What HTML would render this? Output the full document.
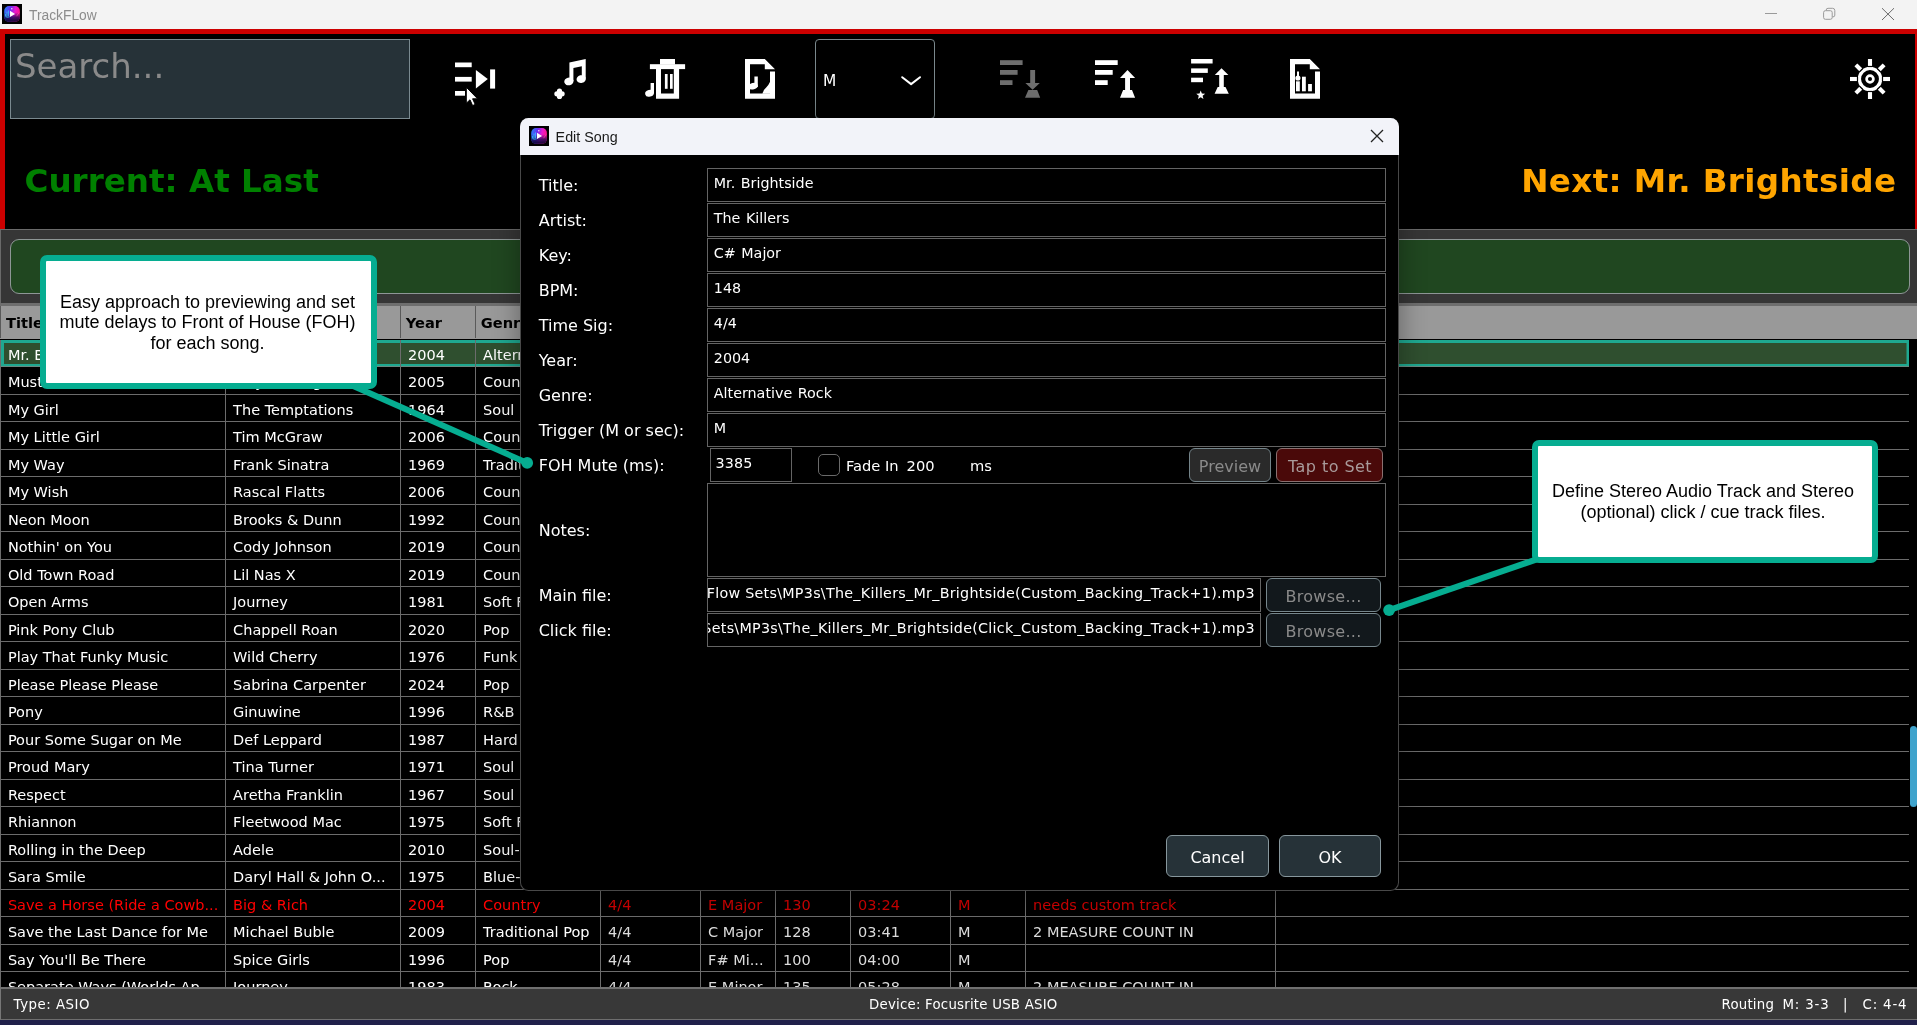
<!DOCTYPE html>
<html><head><meta charset="utf-8"><title>TrackFLow</title>
<style>
*{box-sizing:border-box;margin:0;padding:0}
html,body{width:1917px;height:1025px;overflow:hidden;background:#000}
body{position:relative;font-family:"DejaVu Sans","Liberation Sans",sans-serif;color:#fff}
.abs{position:absolute}
#titlebar{position:absolute;left:0;top:0;width:1917px;height:29px;background:#f3f3f3}
#titlebar .appicon{position:absolute;left:2px;top:4px}
#titlebar .ttl{position:absolute;left:29px;top:1px;line-height:29px;font-family:"Liberation Sans",sans-serif;font-size:13.8px;color:#8c8c8c}
#redframe{position:absolute;left:0;top:29px;width:1917px;height:200px;background:#000;border:5px solid #cc0000;border-bottom:none;border-right-width:2.2px}
#search{position:absolute;left:10px;top:39px;width:400px;height:80px;background:#263238;border:1px solid #7a8a90;color:#8a8a8a;font-size:34px;line-height:40px;padding:5.5px 0 0 4px}
#current{position:absolute;left:24.5px;top:160.5px;font-weight:bold;font-size:32.6px;line-height:40px;color:#008000;white-space:nowrap}
#next{position:absolute;right:20.6px;top:160.5px;letter-spacing:0.36px;font-weight:bold;font-size:32.6px;line-height:40px;color:#ffa500;white-space:nowrap}
#combo{position:absolute;left:815px;top:39px;width:120px;height:80px;border:1px solid #7a888c;border-radius:4px;background:#000}
#combo span{position:absolute;left:7px;top:1px;line-height:80px;font-size:15.4px;color:#fff}
#panel{position:absolute;left:0;top:229px;width:1917px;height:76px;background:#363636;border-top:1px solid #6a6a6a;border-left:1.2px solid #6a6a6a}
#greenbar{position:absolute;left:10px;top:239px;width:1900px;height:55px;background:#204720;border:1px solid #8e9696;border-radius:9px}
#table{position:absolute;left:0;top:302.6px;width:1917px;height:684.2px;overflow:hidden;background:#000}
.thead{position:absolute;left:0;top:0;width:1917px;height:36.2px;background:#999;border-top:3.3px solid #6e6e6e}
.hc{position:absolute;top:0;height:32.9px;line-height:33.6px;padding-left:5px;font-weight:bold;font-size:14.6px;color:#000;border-left:1.2px solid #5a5a5a;white-space:nowrap;overflow:hidden}
.tbody{position:absolute;left:0;top:37.4px;width:1909px;height:660px}
.tr{position:absolute;left:0;width:1909px;height:27.5px;border-bottom:1.3px solid #6c6c6c;font-size:14.5px;line-height:31px;color:#fff}
.tr.red{color:#f00}
.td.dim{color:#dcdcdc}
.tr.red .td.dim{color:#d20000}
.tr.sel{background:#2f4f2f;box-shadow:inset 0 3px 0 #1fa890, inset 0 -1px 0 #6a8a80, inset 0 -3px 0 #1fa890, inset 4px 0 0 #1fa890, inset -2.5px 0 0 #1fa890;border-bottom:none}
.td{position:absolute;top:0;height:27.5px;padding-left:7.3px;white-space:nowrap;overflow:hidden;border-left:1.3px solid #6c6c6c}
.tr .td:first-child{padding-left:6.9px}
#status{position:absolute;left:0;top:986.7px;width:1917px;height:33.4px;background:#383838;border-top:2.4px solid #707070;border-bottom:1.4px solid #6e6e6e;border-left:1.2px solid #777;font-size:13.33px;letter-spacing:0.22px;line-height:31.6px;color:#fff}
#bottomstrip{position:absolute;left:0;top:1020.1px;width:1917px;height:4.9px;background:#20204a}
#scroll{position:absolute;left:1909.9px;top:726px;width:7.1px;height:80.8px;background:#3fa3cc;border-radius:3.5px}
#dialog{position:absolute;left:519.6px;top:118px;width:879.2px;height:772.9px;background:#000;box-shadow:inset 0 0 0 1px #484848, 0 2px 26px 2px rgba(0,0,0,0.32);border-radius:8.5px;overflow:hidden}
#dtitle{position:absolute;left:0;top:0;width:879px;height:36.8px;background:#f2f3f9}
#dtitle .appicon{position:absolute;left:9px;top:8px}
#dtitle .ttl{position:absolute;left:36px;top:0.7px;line-height:37px;font-family:"Liberation Sans",sans-serif;font-size:14.3px;color:#1a1a1a}
#dialog{word-spacing:0}
.fld{word-spacing:1px}
.lbl{position:absolute;left:19.1px;font-size:16px;line-height:20px;color:#fff;white-space:nowrap}
.fld{position:absolute;left:187.7px;width:678.5px;height:34.2px;border:1.4px solid #646464;font-size:14.3px;line-height:17px;padding:6.5px 0 0 5.5px;color:#fff;white-space:nowrap;overflow:hidden}
.btn{position:absolute;border-radius:6px;font-size:16px;text-align:center;white-space:nowrap}
.sm{font-size:14.67px;line-height:20px;color:#fff;white-space:nowrap}
.fld.file{padding-left:0}
.fld.file span{position:absolute;right:5px;top:5.5px;letter-spacing:0.27px;word-spacing:0}
.callout{position:absolute;background:#fff;border:6px solid #06ad91;border-radius:7px;color:#000;font-family:"Liberation Sans",sans-serif;font-size:18px;line-height:20.7px;text-align:center}
#root{position:absolute;left:0;top:0;width:1917px;height:1025px;overflow:hidden;will-change:transform;background:#000}
</style></head><body><div id="root">
<div id="titlebar"><svg class="appicon" viewBox="0 0 20 20" width="20" height="20"><defs><linearGradient id="ig1" x1="0" y1="0" x2="1" y2="0.25"><stop offset="0" stop-color="#1e8cff"/><stop offset="0.42" stop-color="#6a2cf0"/><stop offset="0.72" stop-color="#e81ad0"/><stop offset="1" stop-color="#ff1490"/></linearGradient><linearGradient id="ih1" x1="0" y1="0" x2="0" y2="1"><stop offset="0.4" stop-color="#08044a" stop-opacity="0"/><stop offset="0.72" stop-color="#0a0648" stop-opacity="0.72"/><stop offset="1" stop-color="#06042a" stop-opacity="0.95"/></linearGradient></defs><rect width="20" height="20" fill="#000"/><rect x="2.2" y="2.1" width="15.7" height="15.7" rx="4.8" fill="url(#ig1)"/><rect x="2.2" y="2.1" width="15.7" height="15.7" rx="4.8" fill="url(#ih1)"/><path d="M3.6 9.8v2.2M5 7.6v4.6M6.6 6.4v5.6" stroke="#35c8ff" stroke-width="1" fill="none" opacity="0.85"/><path d="M3.4 12.6Q5.5 13.6 7.6 12.8" stroke="#35d8ff" stroke-width="0.9" fill="none" opacity="0.9"/><circle cx="9.8" cy="4.7" r="0.75" fill="#fff" opacity="0.9"/><path d="M14.6 12.2L17 8.6" stroke="#ff60c8" stroke-width="0.6" opacity="0.8"/><path d="M8 6.8L13.1 9.9L8 13Z" fill="#fff"/></svg><span class="ttl">TrackFLow</span>
<svg class="abs" style="left:1755px;top:0" width="162" height="29" viewBox="0 0 162 29"><g stroke="#9a9a9a" stroke-width="1" fill="none"><path d="M10 13.5h12"/><rect x="68.6" y="10.7" width="8.6" height="8.6" rx="1.8"/><path d="M71.2 10.4v-0.3a1.8 1.8 0 0 1 1.8-1.8h4.6a2.2 2.2 0 0 1 2.2 2.2v4.6a1.8 1.8 0 0 1-1.8 1.8h-0.5"/></g><path d="M127 8.2l12 11.8M139 8.2l-12 11.8" stroke="#6a6a6a" stroke-width="1" fill="none"/></svg>
</div>
<div id="redframe"></div>
<div id="search">Search...</div>
<div id="current">Current: At Last</div>
<div id="next">Next: Mr. Brightside</div>
<div id="combo"><span>M</span><svg class="abs" style="left:84px;top:34px" width="22" height="14" viewBox="0 0 22 14"><path d="M2.2 3.2l8.9 6.9 8.9-6.9" stroke="#fff" stroke-width="2" fill="none" stroke-linecap="round" stroke-linejoin="round"/></svg></div>
<svg class="abs" style="left:0;top:0" width="1917" height="125" viewBox="0 0 1917 125"><g fill="#fff"><rect x="455" y="62.5" width="16.7" height="4.7"/><rect x="455" y="76.9" width="16.7" height="4.7"/><rect x="455" y="91" width="10" height="4.7"/><path d="M475.9 70L487.8 79L475.9 88.4Z"/><rect x="490.1" y="69.4" width="5" height="19.2"/><path d="M466.3 87.2V103.2L470 99.8L472.6 105.6L475.2 104.4L472.6 98.8H477.6Z" fill="#fff" stroke="#000" stroke-width="1" stroke-linejoin="miter"/><path d="M569.4 62.6L585.7 59V78.6H581.8V66.2L573.4 68.1V81H569.4Z"/><ellipse cx="568.9" cy="81.4" rx="4.7" ry="3.9" transform="rotate(-15 568.9 81.4)"/><ellipse cx="581.2" cy="79.1" rx="4.7" ry="3.9" transform="rotate(-15 581.2 79.1)"/><path d="M559.5 91.2V96.4M556.9 93.8H562.1" stroke="#fff" stroke-width="5.2" stroke-linecap="round" fill="none"/><rect x="660" y="59" width="15" height="5.6"/><rect x="649.9" y="64.2" width="35.2" height="4.9"/><path fill-rule="evenodd" d="M656 69H679.1V98.8H656Z M661 69V93.6H673.8V69Z"/><rect x="664.9" y="74" width="2.7" height="14.8"/><rect x="670" y="74" width="2.7" height="14.8"/><rect x="650.6" y="83" width="3.4" height="10.5"/><ellipse cx="649.5" cy="93.3" rx="4.4" ry="3.3" transform="rotate(-15 649.5 93.3)"/><path d="M745 59H764.8V64.2H750V93.6H770V71.5H775V98.8H745Z M764.8 59L775 69.2H764.8Z" fill="#fff"/><rect x="754.4" y="76.5" width="3.4" height="10.5"/><ellipse cx="753.2" cy="86.2" rx="4.6" ry="3.2" transform="rotate(-15 753.2 86.2)"/><path d="M770.2 81.5V93.8H762.4Q763.5 89.6 766.2 87.6Q768.6 85.2 770.2 81.5Z"/><rect x="1095" y="60.2" width="22.7" height="4.8" fill="#fff"/><rect x="1095" y="70" width="17.7" height="4.8" fill="#fff"/><rect x="1095" y="80.2" width="12.7" height="4.8" fill="#fff"/><path d="M1127.5 70L1135.1 78H1130V90H1132L1135.1 97.7H1120L1123.1 90H1125.1V78H1120Z"/><rect x="1191.1" y="59" width="21.5" height="4.5" fill="#fff"/><rect x="1191.1" y="68.4" width="16.7" height="4.5" fill="#fff"/><rect x="1191.1" y="77.7" width="11.9" height="4.5" fill="#fff"/><path d="M1221.5 68.2L1228.4 75H1223.8V87.1H1225.5L1228.8 93.8H1214.6L1217.7 87.1H1219.2V75H1214.8Z"/><path d="M1200.70 90.50L1201.88 93.58L1205.17 93.75L1202.60 95.82L1203.46 99.00L1200.70 97.20L1197.94 99.00L1198.80 95.82L1196.23 93.75L1199.52 93.58Z"/><path d="M1290 59H1309.8V64.2H1295V93.6H1315V71.5H1320V98.8H1290Z M1309.8 59L1320 69.2H1309.8Z" fill="#fff"/><rect x="1296" y="81.3" width="3.8" height="10"/><rect x="1302" y="76.7" width="3.8" height="14.6"/><rect x="1308.1" y="84" width="3.8" height="7.3"/><circle cx="1297.9" cy="78" r="2.6"/><rect x="1297" y="71.5" width="2" height="7"/></g><g fill="#6e6e6e"><rect x="1000" y="60.2" width="22.6" height="4.8" fill="#6e6e6e"/><rect x="1000" y="70" width="17.6" height="4.8" fill="#6e6e6e"/><rect x="1000" y="80.2" width="12.5" height="4.8" fill="#6e6e6e"/><path d="M1030.2 70H1035.1V83H1039.8L1032.6 89.8L1025.4 83H1030.2Z"/><path d="M1028.4 90H1037.2L1040.2 97.7H1025Z"/></g><circle cx="1870" cy="79" r="10.6" fill="none" stroke="#fff" stroke-width="3.3"/><circle cx="1870" cy="79" r="3.4" fill="none" stroke="#fff" stroke-width="2.7"/><rect x="1867.95" y="59" width="4.1" height="6.9" fill="#fff" transform="rotate(0 1870 79)"/><rect x="1867.95" y="66.1" width="4.1" height="1" fill="#000" transform="rotate(0 1870 79)"/><rect x="1867.95" y="59" width="4.1" height="6.9" fill="#fff" transform="rotate(45 1870 79)"/><rect x="1867.95" y="66.1" width="4.1" height="1" fill="#000" transform="rotate(45 1870 79)"/><rect x="1867.95" y="59" width="4.1" height="6.9" fill="#fff" transform="rotate(90 1870 79)"/><rect x="1867.95" y="66.1" width="4.1" height="1" fill="#000" transform="rotate(90 1870 79)"/><rect x="1867.95" y="59" width="4.1" height="6.9" fill="#fff" transform="rotate(135 1870 79)"/><rect x="1867.95" y="66.1" width="4.1" height="1" fill="#000" transform="rotate(135 1870 79)"/><rect x="1867.95" y="59" width="4.1" height="6.9" fill="#fff" transform="rotate(180 1870 79)"/><rect x="1867.95" y="66.1" width="4.1" height="1" fill="#000" transform="rotate(180 1870 79)"/><rect x="1867.95" y="59" width="4.1" height="6.9" fill="#fff" transform="rotate(225 1870 79)"/><rect x="1867.95" y="66.1" width="4.1" height="1" fill="#000" transform="rotate(225 1870 79)"/><rect x="1867.95" y="59" width="4.1" height="6.9" fill="#fff" transform="rotate(270 1870 79)"/><rect x="1867.95" y="66.1" width="4.1" height="1" fill="#000" transform="rotate(270 1870 79)"/><rect x="1867.95" y="59" width="4.1" height="6.9" fill="#fff" transform="rotate(315 1870 79)"/><rect x="1867.95" y="66.1" width="4.1" height="1" fill="#000" transform="rotate(315 1870 79)"/></svg>
<div id="panel"></div>
<div id="greenbar"></div>
<div id="table"><div class="thead"><div class="hc" style="left:0px;width:225px">Title</div><div class="hc" style="left:224.8px;width:175px">Artist</div><div class="hc" style="left:399.8px;width:75px">Year</div><div class="hc" style="left:474.8px;width:125px">Genre</div><div class="hc" style="left:599.8px;width:100px">Time Sig</div><div class="hc" style="left:699.8px;width:75px">Key</div><div class="hc" style="left:774.8px;width:75px">BPM</div><div class="hc" style="left:849.8px;width:100px">Duration</div><div class="hc" style="left:949.8px;width:75px">Trigger</div><div class="hc" style="left:1024.8px;width:250px">Notes</div><div class="hc" style="left:1274.8px;width:642px"></div></div><div class="tbody"><div class="tr sel" style="top:-0.10000000000002274px"><div class="td" style="left:0px;width:225px">Mr. Brightside</div><div class="td" style="left:224.8px;width:175px">The Killers</div><div class="td" style="left:399.8px;width:75px">2004</div><div class="td" style="left:474.8px;width:125px">Alternative Rock</div><div class="td dim" style="left:599.8px;width:100px">4/4</div><div class="td dim" style="left:699.8px;width:75px">C# Major</div><div class="td dim" style="left:774.8px;width:75px">148</div><div class="td dim" style="left:849.8px;width:100px">03:42</div><div class="td dim" style="left:949.8px;width:75px">M</div><div class="td dim" style="left:1024.8px;width:250px"></div><div class="td" style="left:1274.8px;width:600px"></div></div><div class="tr" style="top:27.399999999999977px"><div class="td" style="left:0px;width:225px">Must Be Doin' Somethin' R...</div><div class="td" style="left:224.8px;width:175px">Billy Currington</div><div class="td" style="left:399.8px;width:75px">2005</div><div class="td" style="left:474.8px;width:125px">Country</div><div class="td dim" style="left:599.8px;width:100px">4/4</div><div class="td dim" style="left:699.8px;width:75px">G Major</div><div class="td dim" style="left:774.8px;width:75px">72</div><div class="td dim" style="left:849.8px;width:100px">04:35</div><div class="td dim" style="left:949.8px;width:75px">M</div><div class="td dim" style="left:1024.8px;width:250px"></div><div class="td" style="left:1274.8px;width:600px"></div></div><div class="tr" style="top:54.89999999999998px"><div class="td" style="left:0px;width:225px">My Girl</div><div class="td" style="left:224.8px;width:175px">The Temptations</div><div class="td" style="left:399.8px;width:75px">1964</div><div class="td" style="left:474.8px;width:125px">Soul</div><div class="td dim" style="left:599.8px;width:100px">4/4</div><div class="td dim" style="left:699.8px;width:75px">C Major</div><div class="td dim" style="left:774.8px;width:75px">104</div><div class="td dim" style="left:849.8px;width:100px">02:45</div><div class="td dim" style="left:949.8px;width:75px">M</div><div class="td dim" style="left:1024.8px;width:250px"></div><div class="td" style="left:1274.8px;width:600px"></div></div><div class="tr" style="top:82.39999999999998px"><div class="td" style="left:0px;width:225px">My Little Girl</div><div class="td" style="left:224.8px;width:175px">Tim McGraw</div><div class="td" style="left:399.8px;width:75px">2006</div><div class="td" style="left:474.8px;width:125px">Country</div><div class="td dim" style="left:599.8px;width:100px">4/4</div><div class="td dim" style="left:699.8px;width:75px">D Major</div><div class="td dim" style="left:774.8px;width:75px">76</div><div class="td dim" style="left:849.8px;width:100px">03:40</div><div class="td dim" style="left:949.8px;width:75px">M</div><div class="td dim" style="left:1024.8px;width:250px"></div><div class="td" style="left:1274.8px;width:600px"></div></div><div class="tr" style="top:109.89999999999998px"><div class="td" style="left:0px;width:225px">My Way</div><div class="td" style="left:224.8px;width:175px">Frank Sinatra</div><div class="td" style="left:399.8px;width:75px">1969</div><div class="td" style="left:474.8px;width:125px">Traditional Pop</div><div class="td dim" style="left:599.8px;width:100px">4/4</div><div class="td dim" style="left:699.8px;width:75px">D Major</div><div class="td dim" style="left:774.8px;width:75px">76</div><div class="td dim" style="left:849.8px;width:100px">04:35</div><div class="td dim" style="left:949.8px;width:75px">M</div><div class="td dim" style="left:1024.8px;width:250px"></div><div class="td" style="left:1274.8px;width:600px"></div></div><div class="tr" style="top:137.39999999999998px"><div class="td" style="left:0px;width:225px">My Wish</div><div class="td" style="left:224.8px;width:175px">Rascal Flatts</div><div class="td" style="left:399.8px;width:75px">2006</div><div class="td" style="left:474.8px;width:125px">Country</div><div class="td dim" style="left:599.8px;width:100px">4/4</div><div class="td dim" style="left:699.8px;width:75px">G Major</div><div class="td dim" style="left:774.8px;width:75px">72</div><div class="td dim" style="left:849.8px;width:100px">04:08</div><div class="td dim" style="left:949.8px;width:75px">M</div><div class="td dim" style="left:1024.8px;width:250px"></div><div class="td" style="left:1274.8px;width:600px"></div></div><div class="tr" style="top:164.89999999999998px"><div class="td" style="left:0px;width:225px">Neon Moon</div><div class="td" style="left:224.8px;width:175px">Brooks &amp; Dunn</div><div class="td" style="left:399.8px;width:75px">1992</div><div class="td" style="left:474.8px;width:125px">Country</div><div class="td dim" style="left:599.8px;width:100px">4/4</div><div class="td dim" style="left:699.8px;width:75px">F Major</div><div class="td dim" style="left:774.8px;width:75px">104</div><div class="td dim" style="left:849.8px;width:100px">04:21</div><div class="td dim" style="left:949.8px;width:75px">M</div><div class="td dim" style="left:1024.8px;width:250px"></div><div class="td" style="left:1274.8px;width:600px"></div></div><div class="tr" style="top:192.39999999999998px"><div class="td" style="left:0px;width:225px">Nothin' on You</div><div class="td" style="left:224.8px;width:175px">Cody Johnson</div><div class="td" style="left:399.8px;width:75px">2019</div><div class="td" style="left:474.8px;width:125px">Country</div><div class="td dim" style="left:599.8px;width:100px">4/4</div><div class="td dim" style="left:699.8px;width:75px">A Major</div><div class="td dim" style="left:774.8px;width:75px">77</div><div class="td dim" style="left:849.8px;width:100px">03:38</div><div class="td dim" style="left:949.8px;width:75px">M</div><div class="td dim" style="left:1024.8px;width:250px"></div><div class="td" style="left:1274.8px;width:600px"></div></div><div class="tr" style="top:219.89999999999998px"><div class="td" style="left:0px;width:225px">Old Town Road</div><div class="td" style="left:224.8px;width:175px">Lil Nas X</div><div class="td" style="left:399.8px;width:75px">2019</div><div class="td" style="left:474.8px;width:125px">Country Rap</div><div class="td dim" style="left:599.8px;width:100px">4/4</div><div class="td dim" style="left:699.8px;width:75px">G# Minor</div><div class="td dim" style="left:774.8px;width:75px">136</div><div class="td dim" style="left:849.8px;width:100px">02:37</div><div class="td dim" style="left:949.8px;width:75px">M</div><div class="td dim" style="left:1024.8px;width:250px"></div><div class="td" style="left:1274.8px;width:600px"></div></div><div class="tr" style="top:247.39999999999998px"><div class="td" style="left:0px;width:225px">Open Arms</div><div class="td" style="left:224.8px;width:175px">Journey</div><div class="td" style="left:399.8px;width:75px">1981</div><div class="td" style="left:474.8px;width:125px">Soft Rock</div><div class="td dim" style="left:599.8px;width:100px">3/4</div><div class="td dim" style="left:699.8px;width:75px">D Major</div><div class="td dim" style="left:774.8px;width:75px">100</div><div class="td dim" style="left:849.8px;width:100px">03:18</div><div class="td dim" style="left:949.8px;width:75px">M</div><div class="td dim" style="left:1024.8px;width:250px"></div><div class="td" style="left:1274.8px;width:600px"></div></div><div class="tr" style="top:274.9px"><div class="td" style="left:0px;width:225px">Pink Pony Club</div><div class="td" style="left:224.8px;width:175px">Chappell Roan</div><div class="td" style="left:399.8px;width:75px">2020</div><div class="td" style="left:474.8px;width:125px">Pop</div><div class="td dim" style="left:599.8px;width:100px">4/4</div><div class="td dim" style="left:699.8px;width:75px">G Major</div><div class="td dim" style="left:774.8px;width:75px">107</div><div class="td dim" style="left:849.8px;width:100px">04:18</div><div class="td dim" style="left:949.8px;width:75px">M</div><div class="td dim" style="left:1024.8px;width:250px"></div><div class="td" style="left:1274.8px;width:600px"></div></div><div class="tr" style="top:302.4px"><div class="td" style="left:0px;width:225px">Play That Funky Music</div><div class="td" style="left:224.8px;width:175px">Wild Cherry</div><div class="td" style="left:399.8px;width:75px">1976</div><div class="td" style="left:474.8px;width:125px">Funk Rock</div><div class="td dim" style="left:599.8px;width:100px">4/4</div><div class="td dim" style="left:699.8px;width:75px">E Minor</div><div class="td dim" style="left:774.8px;width:75px">109</div><div class="td dim" style="left:849.8px;width:100px">04:56</div><div class="td dim" style="left:949.8px;width:75px">M</div><div class="td dim" style="left:1024.8px;width:250px"></div><div class="td" style="left:1274.8px;width:600px"></div></div><div class="tr" style="top:329.9px"><div class="td" style="left:0px;width:225px">Please Please Please</div><div class="td" style="left:224.8px;width:175px">Sabrina Carpenter</div><div class="td" style="left:399.8px;width:75px">2024</div><div class="td" style="left:474.8px;width:125px">Pop</div><div class="td dim" style="left:599.8px;width:100px">4/4</div><div class="td dim" style="left:699.8px;width:75px">A Major</div><div class="td dim" style="left:774.8px;width:75px">107</div><div class="td dim" style="left:849.8px;width:100px">03:06</div><div class="td dim" style="left:949.8px;width:75px">M</div><div class="td dim" style="left:1024.8px;width:250px"></div><div class="td" style="left:1274.8px;width:600px"></div></div><div class="tr" style="top:357.4px"><div class="td" style="left:0px;width:225px">Pony</div><div class="td" style="left:224.8px;width:175px">Ginuwine</div><div class="td" style="left:399.8px;width:75px">1996</div><div class="td" style="left:474.8px;width:125px">R&amp;B</div><div class="td dim" style="left:599.8px;width:100px">4/4</div><div class="td dim" style="left:699.8px;width:75px">C# Minor</div><div class="td dim" style="left:774.8px;width:75px">71</div><div class="td dim" style="left:849.8px;width:100px">04:11</div><div class="td dim" style="left:949.8px;width:75px">M</div><div class="td dim" style="left:1024.8px;width:250px"></div><div class="td" style="left:1274.8px;width:600px"></div></div><div class="tr" style="top:384.9px"><div class="td" style="left:0px;width:225px">Pour Some Sugar on Me</div><div class="td" style="left:224.8px;width:175px">Def Leppard</div><div class="td" style="left:399.8px;width:75px">1987</div><div class="td" style="left:474.8px;width:125px">Hard Rock</div><div class="td dim" style="left:599.8px;width:100px">4/4</div><div class="td dim" style="left:699.8px;width:75px">C# Major</div><div class="td dim" style="left:774.8px;width:75px">86</div><div class="td dim" style="left:849.8px;width:100px">04:25</div><div class="td dim" style="left:949.8px;width:75px">M</div><div class="td dim" style="left:1024.8px;width:250px"></div><div class="td" style="left:1274.8px;width:600px"></div></div><div class="tr" style="top:412.4px"><div class="td" style="left:0px;width:225px">Proud Mary</div><div class="td" style="left:224.8px;width:175px">Tina Turner</div><div class="td" style="left:399.8px;width:75px">1971</div><div class="td" style="left:474.8px;width:125px">Soul</div><div class="td dim" style="left:599.8px;width:100px">4/4</div><div class="td dim" style="left:699.8px;width:75px">D Major</div><div class="td dim" style="left:774.8px;width:75px">171</div><div class="td dim" style="left:849.8px;width:100px">04:57</div><div class="td dim" style="left:949.8px;width:75px">M</div><div class="td dim" style="left:1024.8px;width:250px"></div><div class="td" style="left:1274.8px;width:600px"></div></div><div class="tr" style="top:439.9px"><div class="td" style="left:0px;width:225px">Respect</div><div class="td" style="left:224.8px;width:175px">Aretha Franklin</div><div class="td" style="left:399.8px;width:75px">1967</div><div class="td" style="left:474.8px;width:125px">Soul</div><div class="td dim" style="left:599.8px;width:100px">4/4</div><div class="td dim" style="left:699.8px;width:75px">C Major</div><div class="td dim" style="left:774.8px;width:75px">115</div><div class="td dim" style="left:849.8px;width:100px">02:27</div><div class="td dim" style="left:949.8px;width:75px">M</div><div class="td dim" style="left:1024.8px;width:250px"></div><div class="td" style="left:1274.8px;width:600px"></div></div><div class="tr" style="top:467.4px"><div class="td" style="left:0px;width:225px">Rhiannon</div><div class="td" style="left:224.8px;width:175px">Fleetwood Mac</div><div class="td" style="left:399.8px;width:75px">1975</div><div class="td" style="left:474.8px;width:125px">Soft Rock</div><div class="td dim" style="left:599.8px;width:100px">4/4</div><div class="td dim" style="left:699.8px;width:75px">A Minor</div><div class="td dim" style="left:774.8px;width:75px">129</div><div class="td dim" style="left:849.8px;width:100px">04:11</div><div class="td dim" style="left:949.8px;width:75px">M</div><div class="td dim" style="left:1024.8px;width:250px"></div><div class="td" style="left:1274.8px;width:600px"></div></div><div class="tr" style="top:494.9px"><div class="td" style="left:0px;width:225px">Rolling in the Deep</div><div class="td" style="left:224.8px;width:175px">Adele</div><div class="td" style="left:399.8px;width:75px">2010</div><div class="td" style="left:474.8px;width:125px">Soul-Pop</div><div class="td dim" style="left:599.8px;width:100px">4/4</div><div class="td dim" style="left:699.8px;width:75px">C Minor</div><div class="td dim" style="left:774.8px;width:75px">105</div><div class="td dim" style="left:849.8px;width:100px">03:48</div><div class="td dim" style="left:949.8px;width:75px">M</div><div class="td dim" style="left:1024.8px;width:250px"></div><div class="td" style="left:1274.8px;width:600px"></div></div><div class="tr" style="top:522.4px"><div class="td" style="left:0px;width:225px">Sara Smile</div><div class="td" style="left:224.8px;width:175px">Daryl Hall &amp; John O...</div><div class="td" style="left:399.8px;width:75px">1975</div><div class="td" style="left:474.8px;width:125px">Blue-Eyed Soul</div><div class="td dim" style="left:599.8px;width:100px">4/4</div><div class="td dim" style="left:699.8px;width:75px">G Major</div><div class="td dim" style="left:774.8px;width:75px">80</div><div class="td dim" style="left:849.8px;width:100px">03:07</div><div class="td dim" style="left:949.8px;width:75px">M</div><div class="td dim" style="left:1024.8px;width:250px"></div><div class="td" style="left:1274.8px;width:600px"></div></div><div class="tr red" style="top:549.9px"><div class="td" style="left:0px;width:225px">Save a Horse (Ride a Cowb...</div><div class="td" style="left:224.8px;width:175px">Big &amp; Rich</div><div class="td" style="left:399.8px;width:75px">2004</div><div class="td" style="left:474.8px;width:125px">Country</div><div class="td dim" style="left:599.8px;width:100px">4/4</div><div class="td dim" style="left:699.8px;width:75px">E Major</div><div class="td dim" style="left:774.8px;width:75px">130</div><div class="td dim" style="left:849.8px;width:100px">03:24</div><div class="td dim" style="left:949.8px;width:75px">M</div><div class="td dim" style="left:1024.8px;width:250px">needs custom track</div><div class="td" style="left:1274.8px;width:600px"></div></div><div class="tr" style="top:577.4px"><div class="td" style="left:0px;width:225px">Save the Last Dance for Me</div><div class="td" style="left:224.8px;width:175px">Michael Buble</div><div class="td" style="left:399.8px;width:75px">2009</div><div class="td" style="left:474.8px;width:125px">Traditional Pop</div><div class="td dim" style="left:599.8px;width:100px">4/4</div><div class="td dim" style="left:699.8px;width:75px">C Major</div><div class="td dim" style="left:774.8px;width:75px">128</div><div class="td dim" style="left:849.8px;width:100px">03:41</div><div class="td dim" style="left:949.8px;width:75px">M</div><div class="td dim" style="left:1024.8px;width:250px">2 MEASURE COUNT IN</div><div class="td" style="left:1274.8px;width:600px"></div></div><div class="tr" style="top:604.9px"><div class="td" style="left:0px;width:225px">Say You'll Be There</div><div class="td" style="left:224.8px;width:175px">Spice Girls</div><div class="td" style="left:399.8px;width:75px">1996</div><div class="td" style="left:474.8px;width:125px">Pop</div><div class="td dim" style="left:599.8px;width:100px">4/4</div><div class="td dim" style="left:699.8px;width:75px">F# Mi...</div><div class="td dim" style="left:774.8px;width:75px">100</div><div class="td dim" style="left:849.8px;width:100px">04:00</div><div class="td dim" style="left:949.8px;width:75px">M</div><div class="td dim" style="left:1024.8px;width:250px"></div><div class="td" style="left:1274.8px;width:600px"></div></div><div class="tr" style="top:632.4px"><div class="td" style="left:0px;width:225px">Separate Ways (Worlds Ap...</div><div class="td" style="left:224.8px;width:175px">Journey</div><div class="td" style="left:399.8px;width:75px">1983</div><div class="td" style="left:474.8px;width:125px">Rock</div><div class="td dim" style="left:599.8px;width:100px">4/4</div><div class="td dim" style="left:699.8px;width:75px">E Minor</div><div class="td dim" style="left:774.8px;width:75px">135</div><div class="td dim" style="left:849.8px;width:100px">05:28</div><div class="td dim" style="left:949.8px;width:75px">M</div><div class="td dim" style="left:1024.8px;width:250px">2 MEASURE COUNT IN</div><div class="td" style="left:1274.8px;width:600px"></div></div></div></div>
<div id="scroll"></div>
<div id="status"><span class="abs" style="left:12.6px;letter-spacing:0.5px">Type: ASIO</span><span class="abs" style="left:868px">Device: Focusrite USB ASIO</span><span class="abs" style="left:1720.5px">Routing</span><span class="abs" style="left:1781.5px;letter-spacing:0.85px">M: 3-3</span><span class="abs" style="left:1842px">|</span><span class="abs" style="left:1861.5px;letter-spacing:0.85px">C: 4-4</span></div>
<div id="bottomstrip"></div>
<div id="dialog"><div id="dtitle"><svg class="appicon" viewBox="0 0 20 20" width="20" height="20"><defs><linearGradient id="ig2" x1="0" y1="0" x2="1" y2="0.25"><stop offset="0" stop-color="#1e8cff"/><stop offset="0.42" stop-color="#6a2cf0"/><stop offset="0.72" stop-color="#e81ad0"/><stop offset="1" stop-color="#ff1490"/></linearGradient><linearGradient id="ih2" x1="0" y1="0" x2="0" y2="1"><stop offset="0.4" stop-color="#08044a" stop-opacity="0"/><stop offset="0.72" stop-color="#0a0648" stop-opacity="0.72"/><stop offset="1" stop-color="#06042a" stop-opacity="0.95"/></linearGradient></defs><rect width="20" height="20" fill="#000"/><rect x="2.2" y="2.1" width="15.7" height="15.7" rx="4.8" fill="url(#ig2)"/><rect x="2.2" y="2.1" width="15.7" height="15.7" rx="4.8" fill="url(#ih2)"/><path d="M3.6 9.8v2.2M5 7.6v4.6M6.6 6.4v5.6" stroke="#35c8ff" stroke-width="1" fill="none" opacity="0.85"/><path d="M3.4 12.6Q5.5 13.6 7.6 12.8" stroke="#35d8ff" stroke-width="0.9" fill="none" opacity="0.9"/><circle cx="9.8" cy="4.7" r="0.75" fill="#fff" opacity="0.9"/><path d="M14.6 12.2L17 8.6" stroke="#ff60c8" stroke-width="0.6" opacity="0.8"/><path d="M8 6.8L13.1 9.9L8 13Z" fill="#fff"/></svg><span class="ttl">Edit Song</span><svg class="abs" style="left:849px;top:10.1px" width="16" height="16" viewBox="0 0 16 16"><path d="M2 2l12 12M14 2L2 14" stroke="#222" stroke-width="1.3" fill="none"/></svg></div><div class="lbl" style="top:58px">Title:</div><div class="lbl" style="top:93px">Artist:</div><div class="lbl" style="top:128px">Key:</div><div class="lbl" style="top:163px">BPM:</div><div class="lbl" style="top:198px">Time Sig:</div><div class="lbl" style="top:233px">Year:</div><div class="lbl" style="top:268px">Genre:</div><div class="lbl" style="top:303px">Trigger (M or sec):</div><div class="lbl" style="top:338px">FOH Mute (ms):</div><div class="lbl" style="top:403px">Notes:</div><div class="lbl" style="top:468px">Main file:</div><div class="lbl" style="top:503px">Click file:</div><div class="fld" style="top:49.599999999999994px">Mr. Brightside</div><div class="fld" style="top:84.6px">The Killers</div><div class="fld" style="top:119.6px">C# Major</div><div class="fld" style="top:154.60000000000002px">148</div><div class="fld" style="top:189.60000000000002px">4/4</div><div class="fld" style="top:224.60000000000002px">2004</div><div class="fld" style="top:259.6px">Alternative Rock</div><div class="fld" style="top:294.6px">M</div><div class="fld" style="left:190.39999999999998px;top:330px;width:82px;height:34px;border-width:1px;padding:6px 0 0 4.6px;letter-spacing:0.15px">3385</div><div class="abs" style="left:298.4px;top:336px;width:22px;height:22px;border:1.5px solid #6a6a6a;border-radius:5px;background:#000"></div><div class="abs sm" style="left:326.4px;top:338px">Fade In</div><div class="abs sm" style="left:387.0px;top:338px">200</div><div class="abs sm" style="left:450.4px;top:338px">ms</div><div class="btn" style="left:669.4px;top:330px;width:82px;height:34px;line-height:35px;background:#2a2a2a;border:1px solid #74848a;color:#8a8a8a">Preview</div><div class="btn" style="left:756.9px;top:330px;width:107px;height:34px;line-height:35px;background:#4a0909;border:1px solid #8a7070;color:#a89a9a;letter-spacing:0.45px">Tap to Set</div><div class="fld" style="top:365px;height:94px"></div><div class="fld file" style="top:460px;width:553.5px;height:34px"><span>Flow Sets\MP3s\The_Killers_Mr_Brightside(Custom_Backing_Track+1).mp3</span></div><div class="fld file" style="top:495px;width:553.5px;height:34px"><span>Sets\MP3s\The_Killers_Mr_Brightside(Click_Custom_Backing_Track+1).mp3</span></div><div class="btn" style="left:746.4px;top:460px;width:115px;height:34px;line-height:35px;background:#12181c;border:1.3px solid #76868c;color:#8a8a8a;letter-spacing:0.3px">Browse...</div><div class="btn" style="left:746.4px;top:495px;width:115px;height:34px;line-height:35px;background:#12181c;border:1.3px solid #76868c;color:#8a8a8a;letter-spacing:0.3px">Browse...</div><div class="btn" style="left:646.4px;top:716.8px;width:103px;height:42.2px;line-height:43px;background:#263238;border:1px solid #87979d;color:#fff">Cancel</div><div class="btn" style="left:759.4px;top:716.8px;width:102px;height:42.2px;line-height:43px;background:#263238;border:1px solid #87979d;color:#fff">OK</div></div>
<svg class="abs" style="left:0;top:0;pointer-events:none" width="1917" height="1025" viewBox="0 0 1917 1025"><g stroke="#06ad91" stroke-width="6" fill="none"><path d="M208.5 322L527.2 462.9"/><path d="M1705 501.5L1389.1 610.1"/></g><circle cx="527.2" cy="462.9" r="5.9" fill="#06ad91"/><circle cx="1389.1" cy="610.1" r="5.9" fill="#06ad91"/></svg><div class="callout" style="left:40px;top:255px;width:337px;height:134px;padding:30.5px 2px 0 0">Easy approach to previewing and set<br>mute delays to Front of House (FOH)<br>for each song.</div><div class="callout" style="left:1532px;top:440px;width:346px;height:123px;padding:35px 4px 0 0">Define Stereo Audio Track and Stereo<br>(optional) click / cue track files.</div>
</div></body></html>
